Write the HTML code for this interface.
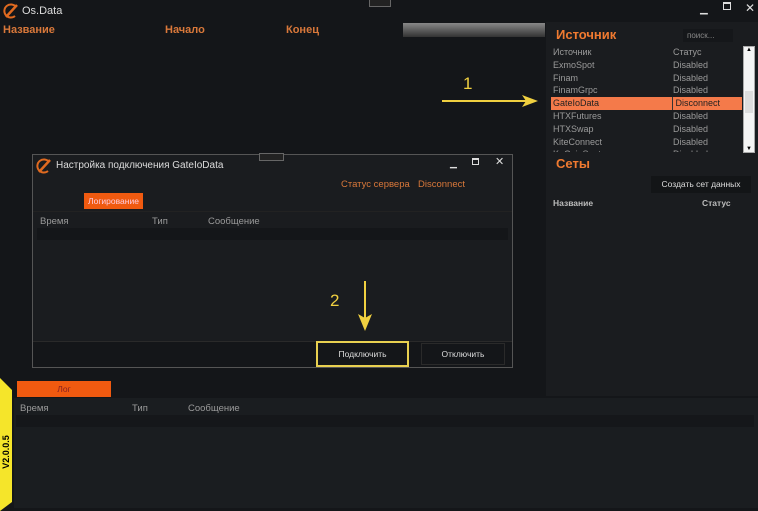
<!DOCTYPE html>
<html><head><meta charset="utf-8"><style>
*{margin:0;padding:0;box-sizing:border-box}
body{width:758px;height:511px;background:#141619;position:relative;overflow:hidden;font-family:"Liberation Sans","DejaVu Sans",sans-serif;color:#9a9a9a;font-size:9px}
.a{position:absolute}
.or{color:#d9783a}
</style></head><body>
<svg class="a" style="left:3px;top:3px" width="16" height="16" viewBox="0 0 16 16"><path d="M13 4 A6.5 6.5 0 1 0 12 13" fill="none" stroke="#e06a20" stroke-width="2"/><path d="M3 14 L14 2" stroke="#e06a20" stroke-width="2.5"/></svg>
<div class="a" style="left:22px;top:5px;font-size:11px;color:#ddd">Os.Data</div>
<div class="a" style="left:369px;top:0;width:22px;height:7px;border:1px solid #666;border-top:none;background:#222"></div>
<div class="a" style="left:700px;top:4px;color:#ddd;font-size:10px">▁</div>
<div class="a" style="left:723px;top:2px;width:8px;height:8px;border:1px solid #ddd;border-top-width:2px"></div>
<div class="a" style="left:745px;top:1px;color:#ddd;font-size:12px">✕</div>
<div class="a or" style="left:3px;top:24px;font-size:11px;font-weight:bold">Название</div>
<div class="a or" style="left:165px;top:24px;font-size:11px;font-weight:bold">Начало</div>
<div class="a or" style="left:286px;top:24px;font-size:11px;font-weight:bold">Конец</div>
<div class="a" style="left:403px;top:23px;width:142px;height:14px;background:linear-gradient(#888,#333)"></div>
<div class="a" style="left:546px;top:22px;width:212px;height:374px;background:#1a1c1f"></div>
<div class="a" style="left:556px;top:27px;font-size:13px;font-weight:bold;color:#f07a30">Источник</div>
<div class="a" style="left:683px;top:29px;width:50px;height:13px;background:#15171a;color:#888;font-size:8px;padding:2px 4px">поиск...</div>
<div class="a" style="left:551px;top:46px;width:191px;height:106px;overflow:hidden;line-height:12.8px;font-size:9px">
<div style="display:flex;padding-left:2px"><span style="width:120px">Источник</span><span>Статус</span></div>
<div style="display:flex;padding-left:2px"><span style="width:120px">ExmoSpot</span><span>Disabled</span></div>
<div style="display:flex;padding-left:2px"><span style="width:120px">Finam</span><span>Disabled</span></div>
<div style="display:flex;padding-left:2px"><span style="width:120px">FinamGrpc</span><span>Disabled</span></div>
<div style="display:flex;padding-left:2px;background:#f47a4a;color:#222"><span style="width:120px;border-right:1px solid #333">GateIoData</span><span>&nbsp;Disconnect</span></div>
<div style="display:flex;padding-left:2px"><span style="width:120px">HTXFutures</span><span>Disabled</span></div>
<div style="display:flex;padding-left:2px"><span style="width:120px">HTXSwap</span><span>Disabled</span></div>
<div style="display:flex;padding-left:2px"><span style="width:120px">KiteConnect</span><span>Disabled</span></div>
<div style="display:flex;padding-left:2px"><span style="width:120px">KuCoinSpot</span><span>Disabled</span></div>
</div>
<div class="a" style="left:743px;top:46px;width:12px;height:107px;background:#f4f4f4;border:1px solid #aaa"><div style="font-size:6px;color:#000;text-align:center">▲</div><div style="position:absolute;top:44px;left:1px;width:8px;height:22px;background:#ddd"></div><div style="position:absolute;bottom:0;width:10px;font-size:6px;color:#000;text-align:center">▼</div></div>
<div class="a" style="left:556px;top:156px;font-size:13px;font-weight:bold;color:#f07a30">Сеты</div>
<div class="a" style="left:651px;top:176px;width:100px;height:17px;background:#131517;color:#ddd;font-size:8.5px;text-align:center;line-height:17px">Создать сет данных</div>
<div class="a" style="left:553px;top:198px;font-weight:bold;color:#bbb;font-size:8.5px">Название</div>
<div class="a" style="left:702px;top:198px;font-weight:bold;color:#bbb;font-size:8.5px">Статус</div>
<div class="a" style="left:463px;top:74px;color:#f0d040;font-size:17px">1</div>
<svg class="a" style="left:440px;top:93px" width="100" height="16"><path d="M2 8 H88" stroke="#f0d040" stroke-width="2"/><path d="M82 2 L98 8 L82 14 L86 8Z" fill="#f0d040"/></svg>
<div class="a" style="left:32px;top:154px;width:481px;height:214px;background:#1a1c1f;border:1px solid #555"></div>
<div class="a" style="left:259px;top:153px;width:25px;height:8px;border:1px solid #666;background:#222"></div>
<svg class="a" style="left:36px;top:158px" width="16" height="16" viewBox="0 0 16 16"><path d="M13 4 A6.5 6.5 0 1 0 12 13" fill="none" stroke="#e06a20" stroke-width="2"/><path d="M3 14 L14 2" stroke="#e06a20" stroke-width="2.5"/></svg>
<div class="a" style="left:56px;top:160px;color:#ddd;font-size:10px">Настройка подключения GateIoData</div>
<div class="a" style="left:450px;top:158px;color:#ddd">▁</div>
<div class="a" style="left:472px;top:158px;width:7px;height:7px;border:1px solid #ddd;border-top-width:2px"></div>
<div class="a" style="left:495px;top:155px;color:#ddd;font-size:11px">✕</div>
<div class="a or" style="left:341px;top:179px;font-size:9.5px">Статус сервера</div>
<div class="a or" style="left:418px;top:179px;font-size:9.5px">Disconnect</div>
<div class="a" style="left:84px;top:193px;width:59px;height:16px;background:#f05a10;color:#fcd;font-size:8.5px;text-align:center;line-height:16px">Логирование</div>
<div class="a" style="left:33px;top:211px;width:479px;height:1px;background:#222"></div>
<div class="a" style="left:40px;top:216px;font-size:9.5px">Время</div>
<div class="a" style="left:152px;top:216px;font-size:9.5px">Тип</div>
<div class="a" style="left:208px;top:216px;font-size:9.5px">Сообщение</div>
<div class="a" style="left:37px;top:228px;width:471px;height:12px;background:#141619"></div>
<div class="a" style="left:33px;top:341px;width:479px;height:26px;background:#141619;border-top:1px solid #2a2a2a"></div>
<div class="a" style="left:316px;top:341px;width:93px;height:26px;border:2px solid #e8d050;background:#141619;color:#ddd;font-size:8.5px;text-align:center;line-height:22px">Подключить</div>
<div class="a" style="left:421px;top:343px;width:84px;height:22px;border:1px solid #2a2a2a;color:#ddd;font-size:8.5px;text-align:center;line-height:21px">Отключить</div>
<div class="a" style="left:330px;top:291px;color:#f0d040;font-size:17px">2</div>
<svg class="a" style="left:356px;top:280px" width="18" height="52"><path d="M9 1 V40" stroke="#f0d040" stroke-width="2"/><path d="M2 34 L9 51 L16 34 L9 38Z" fill="#f0d040"/></svg>
<div class="a" style="left:14px;top:398px;width:744px;height:110px;background:#1a1d20"></div>
<div class="a" style="left:17px;top:381px;width:94px;height:16px;background:#f05a10;color:#822;font-size:8.5px;text-align:center;line-height:16px">Лог</div>
<div class="a" style="left:20px;top:403px;font-size:9.5px">Время</div>
<div class="a" style="left:132px;top:403px;font-size:9.5px">Тип</div>
<div class="a" style="left:188px;top:403px;font-size:9.5px">Сообщение</div>
<div class="a" style="left:16px;top:415px;width:738px;height:12px;background:#15171a"></div>
<svg class="a" style="left:0;top:378px" width="14" height="133"><path d="M0 0 L12 12 V124 L0 133Z" fill="#f5e52a"/></svg>
<div class="a" style="left:-14px;top:447px;transform:rotate(-90deg);font-size:9px;font-weight:bold;color:#000;width:40px;text-align:center">V2.0.0.5</div>
</body></html>
